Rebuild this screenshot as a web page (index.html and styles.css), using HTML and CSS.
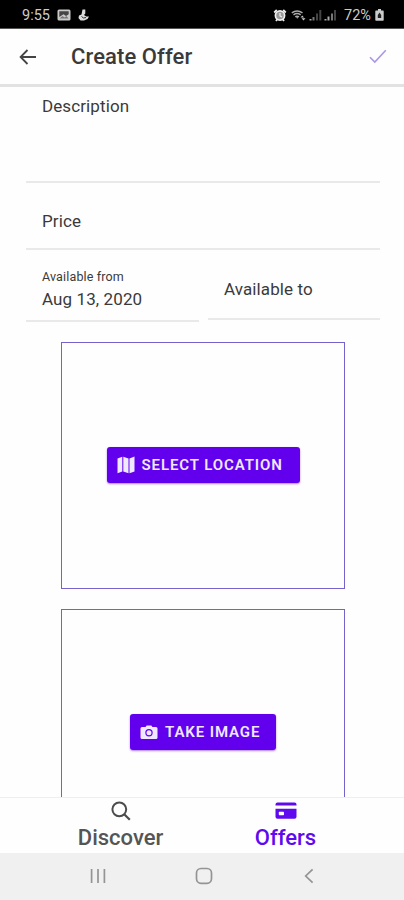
FILE: index.html
```html
<!DOCTYPE html>
<html lang="en">
<head>
<meta charset="utf-8">
<title>Create Offer</title>
<link rel="stylesheet" href="styles.css">
</head>
<body>
<div class="status">
  <span class="time">9:55</span>
  <svg class="s-photo" width="14" height="12" viewBox="0 0 14 12"><rect x=".5" y=".5" width="13" height="11" rx="1.500" fill="#c9c9c9"/><path d="M2.300 2.300h9.400v3L9 7 6.500 5.300 2.300 8z" fill="#444"/><path d="M2.500 9.500l3-2.500 2 1.500 2-1.500 2 2.500z" fill="#777"/></svg>
  <svg class="s-app" width="12" height="12" viewBox="0 0 12 12"><path d="M4.500.5h2.800v4L6 6l2.200 1.500h2.800L9.500 10 6 11.500H2.500L.5 9 1 6.500l2.500-1z" fill="#ddd"/><path d="M3.500 7.500l2 1.500 2.500-.5" stroke="#333" fill="none"/></svg>
  <span class="spacer"></span>
  <svg width="14" height="13" viewBox="0 0 14 13"><path d="M1.200 3.500L3.800 1M12.800 3.500L10.200 1M3 12l1.500-2M11 12L9.500 10" stroke="#eee" stroke-width="1.800"/><circle cx="7" cy="6.500" r="4.600" fill="#999" stroke="#eee" stroke-width="1.700"/><path d="M7 4v3l2 1" stroke="#eee" stroke-width="1.200" fill="none"/></svg>
  <svg class="s-wifi" width="15" height="12" viewBox="0 0 15 12"><path d="M.8 3.800Q6 .2 11.500 3.800M2.500 5.800Q6 3.300 9.700 5.800M4.300 7.800Q6 6.500 8 7.800" stroke="#aaa" stroke-width="1.500" fill="none"/><path d="M5.200 8.200h2l-1 1.500zM9.500 8.500L11.300 6.500 13 8.500zM10.500 9.300h4L12.500 11.500z" fill="#ccc"/></svg>
  <svg class="s-sig" width="13" height="12" viewBox="0 0 13 12"><path d="M.5 10h2v1.500h-2z" fill="#aaa"/><path d="M3.500 8h2v3.500h-2z" fill="#777"/><path d="M7 4.500h2v7H7zM10.300 1h2v10.500h-2z" fill="#444"/></svg>
  <svg class="s-sig2" width="13" height="12" viewBox="0 0 13 12"><path d="M.5 10h2v1.500h-2zM3.500 7.500h2v4h-2z" fill="#aaa"/><path d="M7 4.500h2v7H7z" fill="#777"/><path d="M10 1h2v10.500h-2z" fill="#444"/></svg>
  <span class="pct">72%</span>
  <svg class="s-bat" width="9" height="12" viewBox="0 0 9 12"><path d="M3 0h3v1.500h2q.7 0 .7.800V11q0 .7-.7.700H1q-.7 0-.7-.7V2.300q0-.8.700-.8h2z" fill="#ccc"/><path d="M4.500 3.500L2.800 6v3h3.400V6z" fill="#222"/></svg>
</div>
<header class="bar">
  <svg class="back" width="18" height="16" viewBox="0 0 18 16"><path d="M8.500 1L1.600 8l6.900 7M1.800 8H17" fill="none" stroke="#444" stroke-width="1.800"/></svg>
  <h1>Create Offer</h1>
  <svg class="check" width="18" height="15" viewBox="0 0 18 15"><path d="M1 8.200l4.800 4.900L16.800 1.200" fill="none" stroke="#ab97ea" stroke-width="1.600"/></svg>
</header>
<main>
  <div class="field desc">Description</div>
  <div class="field price">Price</div>
  <div class="dates">
    <div class="field from"><small>Available from</small><span>Aug 13, 2020</span></div>
    <div class="field to">Available to</div>
  </div>
  <section class="box">
    <button class="btn loc"><svg width="18" height="18" viewBox="0 0 18 18"><path d="M.5 2.500L5.300.8v14.700L.5 17.200zM6.300.8l5.200 1.800v14.700l-5.200-1.800zM12.500 2.500L17.500.6v14.800l-5 1.900z" fill="#efe8ff"/></svg>SELECT LOCATION</button>
  </section>
  <section class="box">
    <button class="btn img"><svg width="18" height="15" viewBox="0 0 18 15"><path d="M5.500 2L6.700.6h4.600L12.500 2H16q1.500 0 1.500 1.500v9q0 1.500-1.500 1.500H2Q.5 14 .5 12.500v-9Q.5 2 2 2z" fill="#efe8ff"/><circle cx="9" cy="7.800" r="3.100" fill="none" stroke="#6200ee" stroke-width="1.200"/></svg>TAKE IMAGE</button>
  </section>
</main>
<nav class="tabs">
  <div class="tab discover"><svg width="20" height="20" viewBox="0 0 20 20"><circle cx="8.300" cy="8.300" r="6.900" fill="none" stroke="#4c4c4c" stroke-width="2"/><path d="M13.200 13.200l5.600 5.500" stroke="#4c4c4c" stroke-width="2.200"/></svg><span>Discover</span></div>
  <div class="tab offers"><svg width="22" height="20" viewBox="0 0 22 20"><path d="M.5 4.400V3.500Q.5 1.600 2.500 1.600h17q2 0 2 1.900v.9zM.5 7.800h21v8q0 2-2 2h-17q-2 0-2-2z" fill="#5f0aee"/><rect x="3.800" y="10.800" width="5.200" height="3.400" rx=".7" fill="#fff"/></svg><span>Offers</span></div>
</nav>
<div class="sys">
  <svg width="16" height="16" viewBox="0 0 16 16"><path d="M1.600 1v14M8 1v14M14.400 1v14" stroke="#949494" stroke-width="1.700"/></svg>
  <svg class="home" width="18" height="18" viewBox="0 0 18 18"><rect x="1.500" y="1.500" width="15" height="14.800" rx="4.500" fill="none" stroke="#949494" stroke-width="1.700"/></svg>
  <svg width="10" height="16" viewBox="0 0 10 16"><path d="M8.600 1.300L1.700 8l6.900 6.700" fill="none" stroke="#949494" stroke-width="1.700"/></svg>
</div>
</body>
</html>
```
FILE: styles.css
```css
* { box-sizing: border-box; }
body { margin: 0; width: 404px; height: 900px; overflow: hidden; display: flex; flex-direction: column; background: #fefefe; color: #3a3a3a; font-family: Roboto, sans-serif; }
svg { display: block; flex: none; }
.status { height: 29px; flex: none; background: #000; color: #ccc; display: flex; align-items: center; padding: 2px 20px 0 22px; border-bottom: 1px solid #555; font-size: 14.500px; }
.time { width: 35px; }
.s-app { margin-left: 7px; }
.spacer { flex: 1; }
.s-wifi { margin-left: 4px; }
.s-sig { margin-left: 3px; }
.s-sig2 { margin-left: 2px; }
.pct { margin-left: 7px; width: 29px; }
.s-bat { margin-left: 2px; }
.bar { height: 58px; flex: none; display: flex; align-items: center; padding: 0 17px 0 19px; border-bottom: 3px solid #e2e2e2; }
h1 { margin: 0 auto 0 34px; font-size: 22px; line-height: 28px; font-weight: 500; letter-spacing: .1px; }
main { flex: 1; min-height: 0; overflow: hidden; padding: 0 24px 0 26px; }
.field { border-bottom: 2px solid #e9e9e9; font-size: 17px; line-height: 20px; letter-spacing: .1px; padding-left: 16px; }
.desc { height: 96px; padding-top: 9px; }
.price { height: 67px; padding-top: 28px; }
.dates { display: flex; gap: 9px; align-items: flex-start; }
.from { width: 173px; height: 72px; padding-top: 18px; }
.from small { display: block; font-size: 12.500px; line-height: 17px; letter-spacing: .15px; }
.from span { display: block; line-height: 28px; }
.to { flex: 1; height: 70px; padding-top: 29px; }
.box { width: 284px; height: 247px; margin: 20px 0 0 35px; padding-bottom: 1px; border: 1px solid #7562cb; display: flex; align-items: center; justify-content: center; }
.btn { height: 36px; border: 0; border-radius: 3px; padding: 0 10px; background: #6200ee; color: #efe8ff; display: flex; align-items: center; gap: 7px; font: 600 15px Roboto, sans-serif; letter-spacing: .9px; box-shadow: 0 1px 2px #6200ee80; white-space: nowrap; }
.loc { width: 193px; }
.img { width: 146px; }
.tabs { height: 56px; flex: none; border-top: 1px solid #efefef; display: flex; }
.tab { display: flex; flex-direction: column; align-items: center; padding-top: 3px; font-size: 22px; line-height: 28px; font-weight: 500; color: #555; letter-spacing: 0; }
.tab span { margin-top: 3px; }
.discover { width: 165px; margin-left: 38px; }
.offers { width: 165px; color: #5f0aee; }
.sys { height: 47px; flex: none; background: #f0f0f0; display: flex; align-items: center; padding: 0 90px 1px 90px; justify-content: space-between; }
.home { margin-right: 3px; }
```
